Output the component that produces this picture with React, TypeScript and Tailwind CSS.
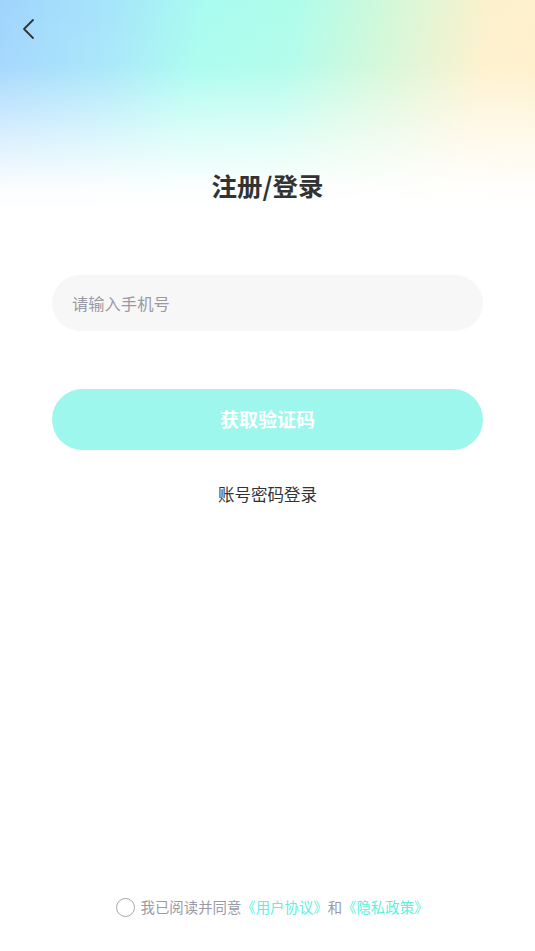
import React from 'react';

export default function App() {
  return (
    <div
      className="relative w-[535px] h-[951px] bg-white flex flex-col"
      style={{ fontFamily: '"Noto Sans CJK SC", "Noto Sans", sans-serif' }}
    >
      <div className="h-[220px] bg-[linear-gradient(to_bottom,rgba(255,255,255,0)_0%,rgba(255,255,255,0.05)_30%,rgba(255,255,255,0.6)_62%,rgba(255,255,255,0.95)_85%,#ffffff_96%),linear-gradient(100deg,#a1d4fd_0%,#a6e6fa_20%,#a9fcf0_36%,#b0fceb_52%,#d3f8d9_68%,#fdf1cd_86%,#fff0cb_100%)] flex flex-col">
        <div className="h-[60px] px-[20px] flex items-center">
          <svg width="16" height="22" viewBox="0 0 16 22" className="mt-[-2px]">
            <path d="M13 2 L4 11 L13 20" fill="none" stroke="#333" strokeWidth="1.8" strokeLinecap="round" strokeLinejoin="round" />
          </svg>
        </div>
        <div className="mt-[108px] text-center text-[25.5px] leading-[34px] font-bold text-[#333333]">注册/登录</div>
      </div>

      <div className="px-[52px] mt-[55px]">
        <div className="h-[56px] rounded-full bg-[#f7f7f7] flex items-center px-[20px] text-[16.3px] text-[#9a9aa6]">
          请输入手机号
        </div>
        <div className="mt-[58px] h-[61px] rounded-full bg-[#9ef7ec] flex items-center justify-center text-[19px] font-bold text-white">
          获取验证码
        </div>
        <div className="mt-[32px] text-center text-[16.5px] text-[#333333]">账号密码登录</div>
      </div>

      <div className="mt-auto mb-[33px] pl-[9px] flex items-center justify-center gap-[6px] text-[14.4px]">
        <div className="w-[19px] h-[19px] rounded-full border-[1.5px] border-[#a8a8ad]" />
        <div className="text-[#9a9aa6]">
          我已阅读并同意<span className="text-[#5ef0dc]">《用户协议》</span>和<span className="text-[#5ef0dc]">《隐私政策》</span>
        </div>
      </div>
    </div>
  );
}
